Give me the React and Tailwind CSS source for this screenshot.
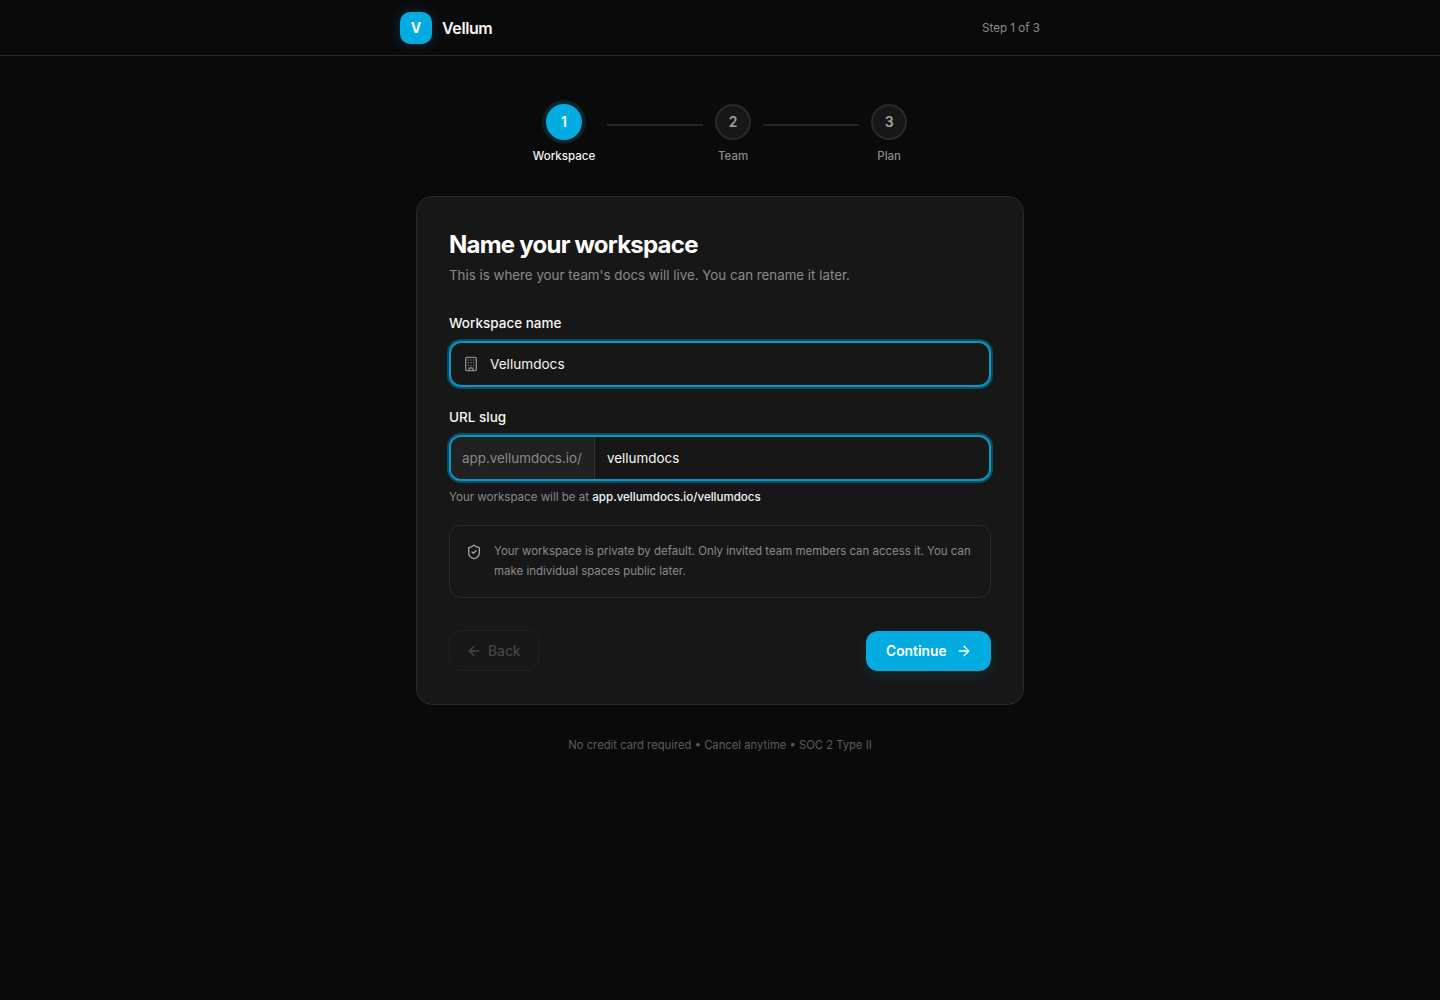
import React from 'react';
import { Building, ShieldCheck, ArrowLeft, ArrowRight } from 'lucide-react';

function Step({ number, label, active }) {
  return (
    <div className="flex flex-col items-center gap-2">
      <div
        className={
          active
            ? 'w-9 h-9 rounded-full flex items-center justify-center bg-[#02abe0] text-white text-sm font-semibold shadow-[0_0_0_4px_rgba(0,173,230,0.15)]'
            : 'w-9 h-9 rounded-full flex items-center justify-center bg-[#171717] border-2 border-[#2a2a2a] text-[#a3a3a3] text-sm font-semibold'
        }
      >
        {number}
      </div>
      <span className={active ? 'text-[11.5px] leading-4 font-medium text-[#f5f5f5]' : 'text-[11.5px] leading-4 font-medium text-[#8a8a8a]'}>
        {label}
      </span>
    </div>
  );
}

export default function App() {
  return (
    <div className="min-h-screen bg-[#0a0a0a] font-['Inter',sans-serif] text-white">
      {/* top bar */}
      <header className="h-14 border-b border-[#262626]">
        <div className="w-[640px] h-full mx-auto flex items-center justify-between">
          <div className="flex items-center gap-2.5">
            <div className="w-8 h-8 rounded-[10px] bg-[#02abe0] flex items-center justify-center text-sm font-bold shadow-[0_0_12px_rgba(0,173,230,0.25)]">
              V
            </div>
            <span className="text-base font-semibold tracking-tight text-[#f5f5f5]">Vellum</span>
          </div>
          <span className="text-[11.6px] leading-4 text-[#8a8a8a]">Step 1 of 3</span>
        </div>
      </header>

      <main className="flex flex-col items-center pt-12">
        {/* stepper */}
        <div className="flex items-start gap-3">
          <Step number="1" label="Workspace" active />
          <div className="w-24 h-0.5 mt-5 bg-[#262626]" />
          <Step number="2" label="Team" />
          <div className="w-24 h-0.5 mt-5 bg-[#262626]" />
          <Step number="3" label="Plan" />
        </div>

        {/* card */}
        <div className="w-[608px] mt-8 px-8 pt-8 pb-[33px] rounded-2xl bg-[#171717] border border-[#2a2a2a]">
          <h1 className="text-2xl leading-8 font-bold tracking-[-0.032em]">Name your workspace</h1>
          <p className="mt-1 text-[13.33px] leading-5 text-[#8a8a8a]">
            This is where your team's docs will live. You can rename it later.
          </p>

          <label className="block mt-7 mb-2 text-[13.5px] leading-5 font-medium text-[#f5f5f5]">Workspace name</label>
          <div className="h-[46px] flex items-center gap-[11px] px-3 rounded-xl bg-[#171717] border-2 border-[#0898c8] shadow-[0_0_0_2px_rgba(0,173,230,0.35)]">
            <Building className="w-4 h-4 text-[#8a8a8a]" />
            <span className="text-[13.6px] text-[#f5f5f5]">Vellumdocs</span>
          </div>

          <label className="block mt-5 mb-2 text-[13.5px] leading-5 font-medium text-[#f5f5f5]">URL slug</label>
          <div className="h-[46px] flex items-stretch rounded-xl overflow-hidden bg-[#171717] border-2 border-[#0898c8] shadow-[0_0_0_2px_rgba(0,173,230,0.35)]">
            <div className="flex items-center pl-[11px] pr-3 bg-[#212121] border-r border-[#333333] text-[13.4px] leading-5 text-[#8a8a8a]">
              app.vellumdocs.io/
            </div>
            <div className="flex items-center px-3 text-[13.45px] leading-5 text-[#f5f5f5]">vellumdocs</div>
          </div>
          <p className="mt-2 text-[11.55px] leading-4 text-[#8a8a8a]">
            Your workspace will be at <span className="font-medium text-[#f5f5f5]">app.vellumdocs.io/vellumdocs</span>
          </p>

          <div className="mt-5 flex gap-3 px-4 pt-[15px] pb-4 rounded-xl border border-[#2a2a2a]">
            <ShieldCheck className="w-4 h-4 mt-[3px] shrink-0 text-[#a3a3a3]" />
            <p className="text-[11.46px] leading-5 text-[#8a8a8a]">
              Your workspace is private by default. Only invited team members can access it. You can make individual spaces public later.
            </p>
          </div>

          <div className="mt-8 flex items-end justify-between">
            <button className="h-[41px] w-[90px] flex items-center gap-1.5 pl-4 rounded-xl border border-[#212121] text-[13.8px] font-medium text-[#454545]">
              <ArrowLeft className="w-4 h-4" />
              <span className="pt-px">Back</span>
            </button>
            <button className="h-10 w-[125px] flex items-center justify-between pl-5 pr-[19px] rounded-xl bg-[#02abe0] text-[13.8px] font-semibold text-white shadow-[0_4px_14px_rgba(0,173,230,0.12)]">
              Continue
              <ArrowRight className="w-4 h-4" />
            </button>
          </div>
        </div>

        <p className="mt-8 text-[11.25px] leading-4 text-[#5c5c5c]">No credit card required • Cancel anytime • SOC 2 Type II</p>
      </main>
    </div>
  );
}
